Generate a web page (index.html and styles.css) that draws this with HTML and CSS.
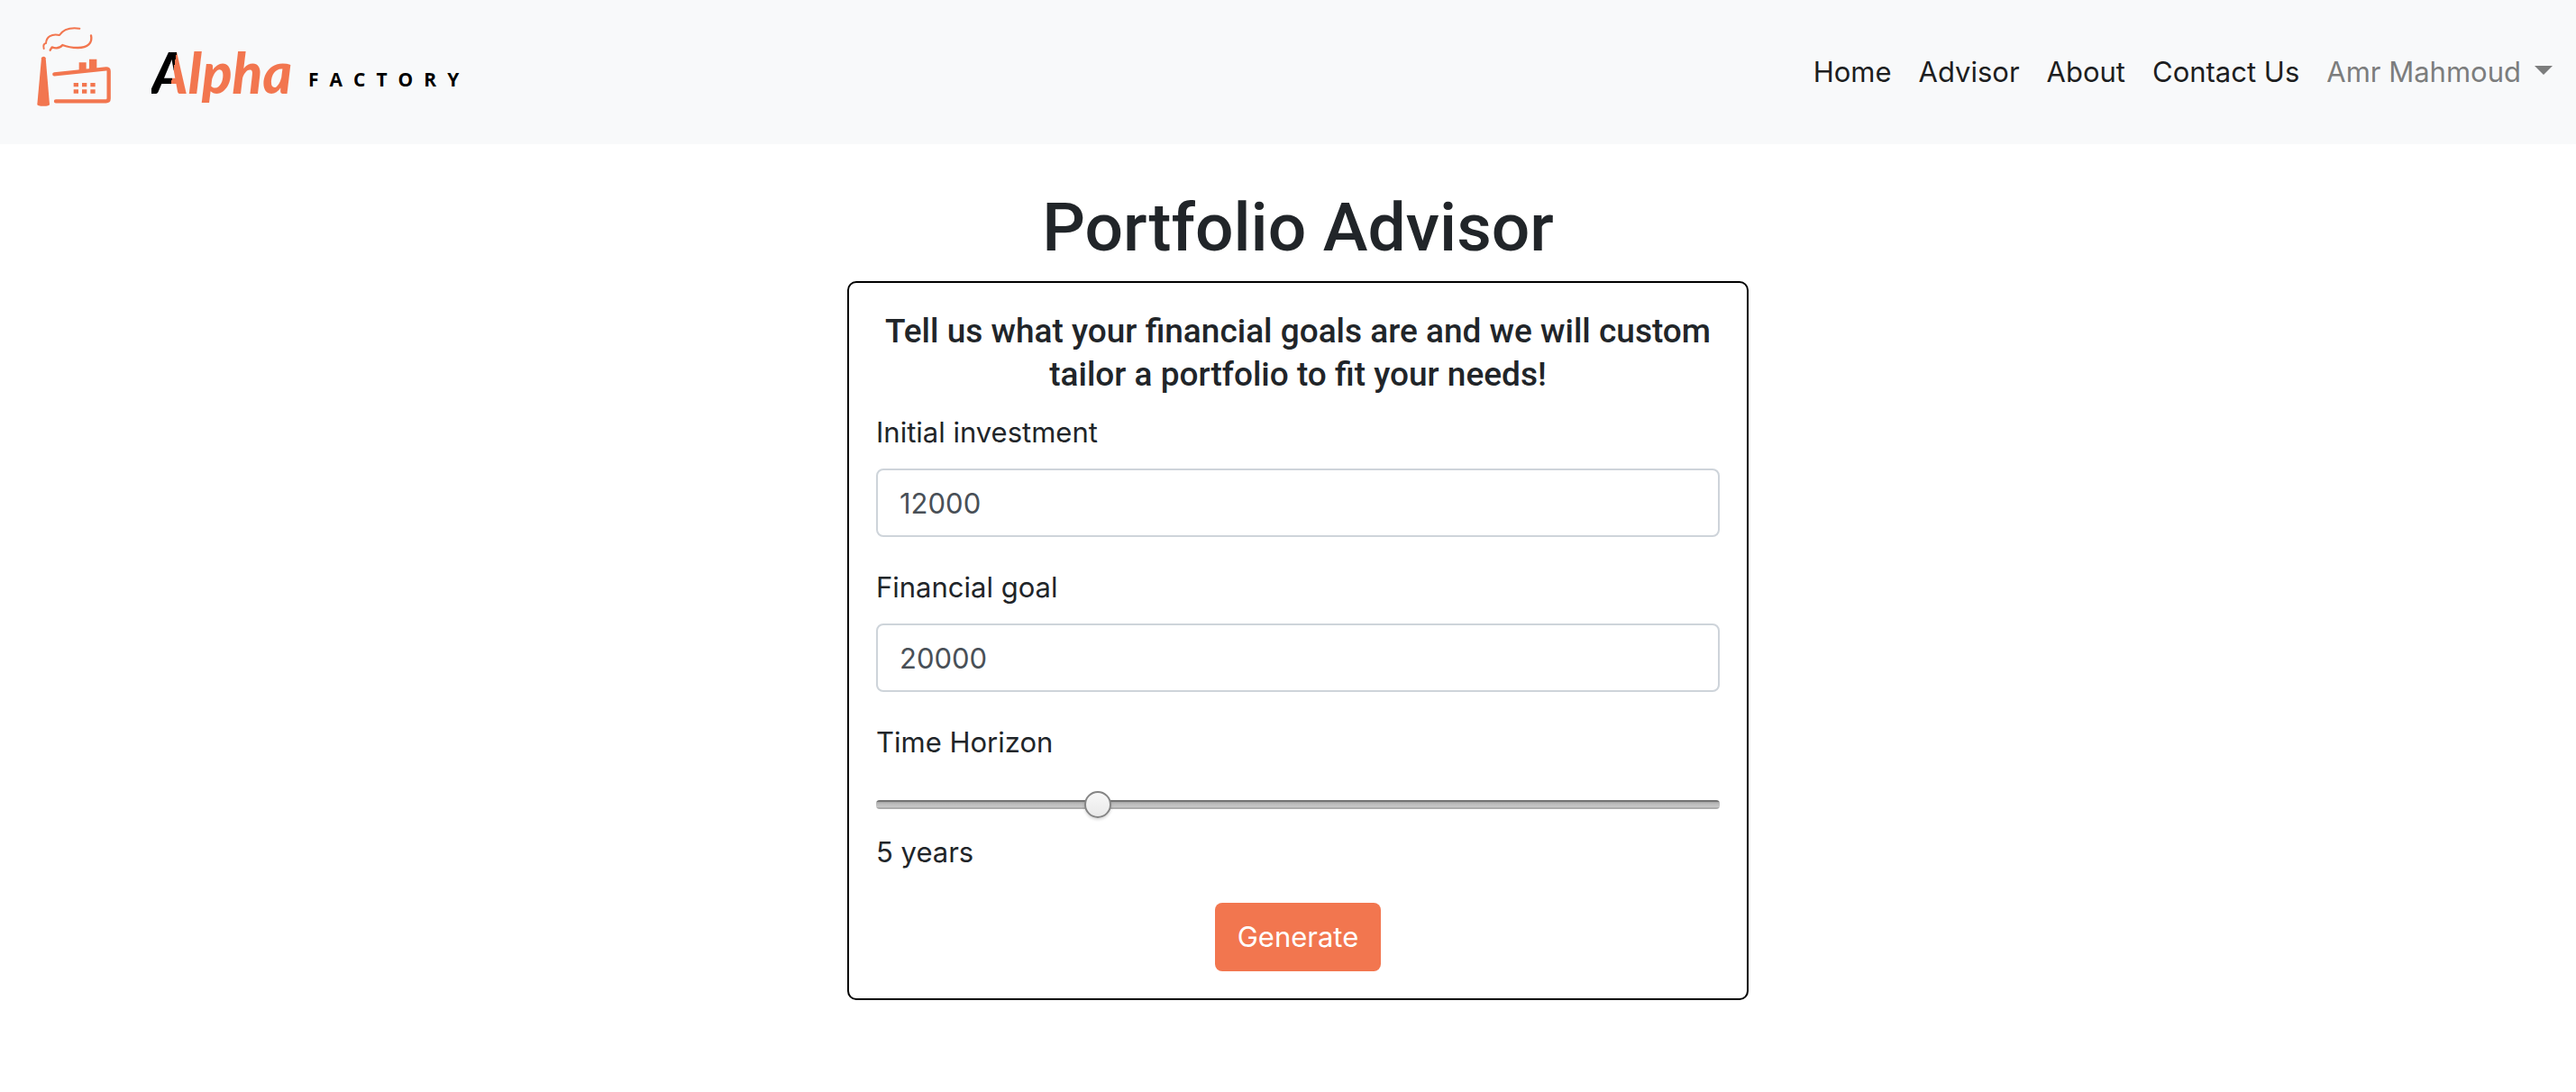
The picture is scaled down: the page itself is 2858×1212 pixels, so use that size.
FILE: index.html
```html
<!DOCTYPE html>
<html lang="en">
<head>
<meta charset="utf-8">
<meta name="viewport" content="width=device-width, initial-scale=1">
<title>Alpha Factory</title>
<link rel="stylesheet" href="styles.css">
</head>
<body>
<header class="navbar">
  <a class="brand" href="#">
    <svg class="brand-icon" viewBox="0 15 390 390" fill="none" stroke="#f2764f" stroke-linecap="round" stroke-linejoin="round" aria-hidden="true">
      <path d="M86 132C83 121 86 115 93 114C94 93 112 81 138 87C151 67 176 61 205 65" stroke-width="6"/>
      <path d="M243 88C249 114 231 129 199 129C181 129 163 126 148 120C139 131 126 132 113 127L107 137" stroke-width="7"/>
      <path d="M78 163Q79 158 85 158Q91 158 92 163L105 317Q105 323 85 323Q64 323 64 317Z" fill="#f2764f" stroke="none"/>
      <path d="M121 217L293 199Q302 198 302 207V298Q302 307 293 307H126" stroke-width="13"/>
      <path d="M203 178H227V207H203ZM237 167H262V203H237Z" fill="#f2764f" stroke="none"/>
      <path d="M185 246h16v13h-16zM213 246h16v13h-16zM241 246h16v13h-16zM185 268h16v13h-16zM213 268h16v13h-16zM241 268h16v13h-16z" fill="#f2764f" stroke="none"/>
    </svg>
    <span class="brand-name">Alpha</span>
    <span class="brand-suffix">FACTORY</span>
  </a>
  <nav class="nav-links">
    <a href="#">Home</a>
    <a href="#">Advisor</a>
    <a href="#">About</a>
    <a href="#">Contact Us</a>
    <a class="user-menu" href="#">Amr Mahmoud</a>
  </nav>
</header>
<main class="page">
  <h1 class="title">Portfolio Advisor</h1>
  <form class="card">
    <h2 class="intro">Tell us what your financial goals are and we will custom tailor a portfolio to fit your needs!</h2>
    <div class="field">
      <label for="investment">Initial investment</label>
      <input class="text-input" id="investment" type="text" inputmode="numeric" value="12000">
    </div>
    <div class="field">
      <label for="goal">Financial goal</label>
      <input class="text-input" id="goal" type="text" inputmode="numeric" value="20000">
    </div>
    <div class="field">
      <label for="horizon">Time Horizon</label>
      <input class="slider" id="horizon" type="range" min="0" max="20" step="0.1" value="5.1">
      <output for="horizon">5 years</output>
    </div>
    <button class="generate" type="button">Generate</button>
  </form>
</main>
</body>
</html>
```
FILE: styles.css
```css
* {
  box-sizing: border-box;
}

body {
  margin: 0;
  background: #fff;
  color: #212529;
  font-family: Inter, "Liberation Sans", sans-serif;
  font-size: 31px;
  line-height: 48px;
}

.navbar {
  display: flex;
  align-items: center;
  justify-content: space-between;
  padding: 15px 26px 15px 20px;
  background: #f8f9fa;
}

.brand {
  display: flex;
  align-items: center;
  color: #000;
  text-decoration: none;
}

.brand-icon {
  width: 130px;
  height: 130px;
}

.brand-name {
  margin-left: 18px;
  padding-right: 8px;
  background: linear-gradient(100deg, #000 30px, #f2764f 30px);
  background-clip: text;
  color: transparent;
  font-family: Lato, sans-serif;
  font-size: 62px;
  font-style: italic;
  font-weight: 900;
  line-height: 72px;
}

.brand-suffix {
  margin-left: 10px;
  padding-top: 16px;
  font-family: "Open Sans", sans-serif;
  font-size: 21px;
  font-weight: 700;
  letter-spacing: 12px;
  line-height: 32px;
}

.nav-links {
  display: flex;
  gap: 30px;
}

.nav-links a {
  color: #1d1e1f;
  text-decoration: none;
}

.nav-links .user-menu {
  display: flex;
  align-items: center;
  gap: 15px;
  color: #7c7d7d;
}

.user-menu::after {
  content: "";
  border: 10px solid transparent;
  border-top-color: currentColor;
  border-bottom: 0;
  margin-bottom: 4px;
}

.page {
  display: flex;
  flex-direction: column;
  align-items: center;
  padding: 44px 0 40px 22px;
}

.title {
  margin: 0 0 12px;
  font-family: Roboto, sans-serif;
  font-size: 75px;
  font-weight: 500;
  line-height: 96px;
}

.card {
  display: flex;
  flex-direction: column;
  gap: 32px;
  width: 100%;
  max-width: 1000px;
  padding: 30px;
  border: 2px solid #000;
  border-radius: 10px;
}

.intro {
  margin: 0 0 -16px;
  font-family: Roboto, sans-serif;
  font-size: 37px;
  font-weight: 500;
  line-height: 48px;
  text-align: center;
}

.field {
  display: flex;
  flex-direction: column;
}

.field label {
  margin-bottom: 16px;
}

.text-input {
  width: 100%;
  height: 76px;
  padding: 12px 24px;
  border: 2px solid #ced4da;
  border-radius: 8px;
  background: #fff;
  color: #495057;
  font: inherit;
}

.slider {
  width: 100%;
  height: 58px;
  margin: 0;
  appearance: none;
  background: transparent;
}

.slider::-webkit-slider-runnable-track {
  height: 10px;
  border-radius: 4px;
  background: linear-gradient(#737373 2px, #a3a3a3 2px, #bbb 4px, #c8c8c8 8px, #acacac 8px);
}

.slider::-webkit-slider-thumb {
  appearance: none;
  width: 30px;
  height: 30px;
  margin-top: -10px;
  border: 2px solid #858585;
  border-radius: 50%;
  background: linear-gradient(#f8f8f8, #e9e9e9);
  box-shadow: 0 2px 3px rgba(0, 0, 0, 0.15);
}

.generate {
  align-self: center;
  height: 76px;
  padding: 0 25px;
  border: 0;
  border-radius: 8px;
  background: #f2764f;
  color: #fff;
  font: inherit;
}
```
